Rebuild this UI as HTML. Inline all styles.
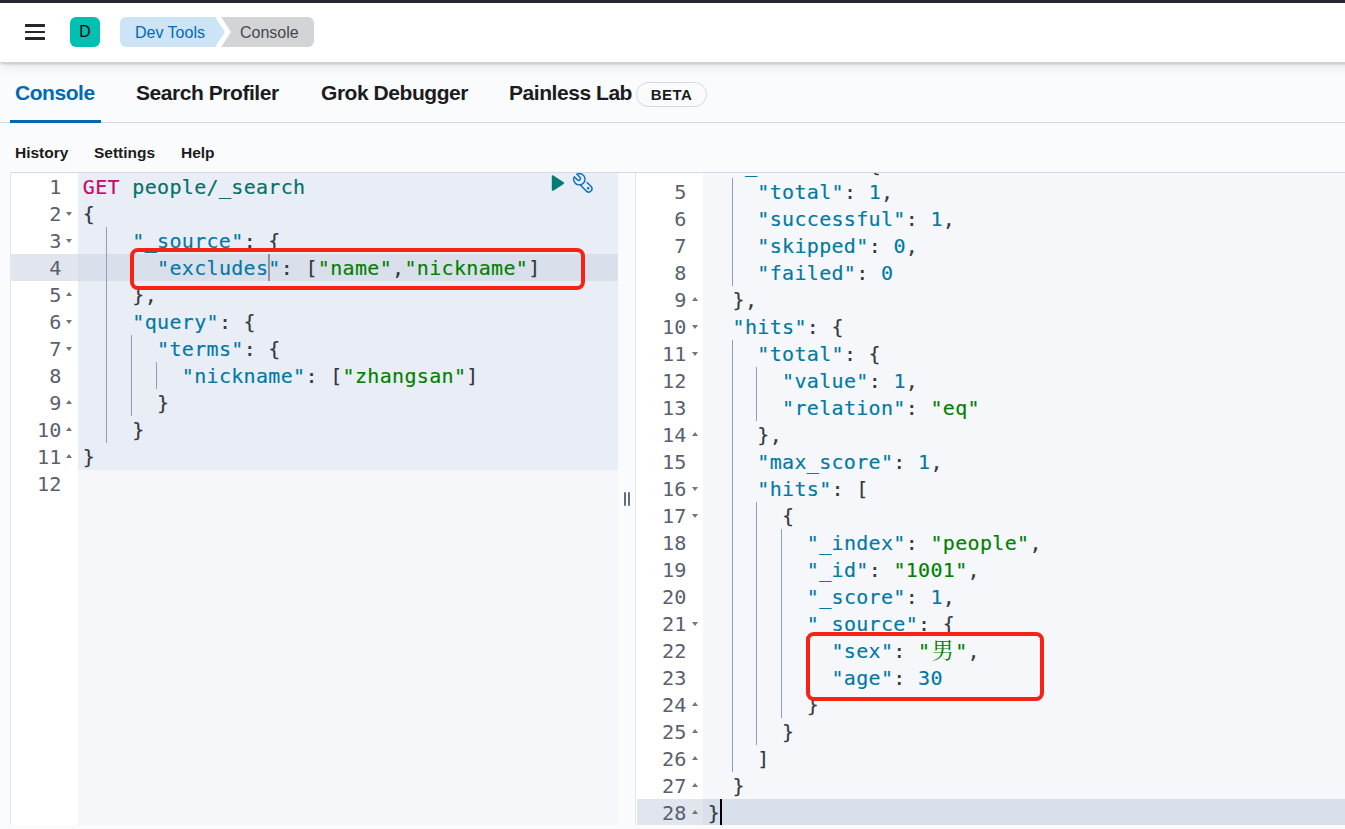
<!DOCTYPE html>
<html lang="en">
<head>
<meta charset="utf-8">
<title>Console - Dev Tools - Kibana</title>
<style>
*{box-sizing:border-box;margin:0;padding:0}
html,body{width:1345px;height:829px;overflow:hidden;background:#fafbfd}
body{position:relative;font-family:"Liberation Sans", "Noto Sans CJK SC", sans-serif;color:#1a1c21}
#topbar{position:absolute;left:0;top:0;width:1345px;height:3px;background:#25262e}
#header{position:absolute;left:0;top:3px;width:1385px;height:60px;background:#fff;border-bottom:1px solid #cdd4e0;box-shadow:0 2px 2px -1px rgba(125,130,140,.3),0 1px 5px -2px rgba(125,130,140,.3),0 6px 10px -2px rgba(130,135,145,.16)}
#burger{position:absolute;left:25px;top:21px;width:20px;height:16px}
#burger i{position:absolute;left:0;width:20px;height:2.8px;background:#25262e;border-radius:.5px}
#avatar{position:absolute;left:70px;top:14px;width:30px;height:30px;border-radius:6px;background:#00bfb3;color:#000;font-size:15.6px;line-height:30.5px;text-align:center}
.bc{position:absolute;top:14px;height:30px;line-height:31.5px;font-size:16px;white-space:nowrap}
#bc1{left:120px;width:105px;background:#cce4f5;color:#006bb4;border-radius:6px 0 0 6px;clip-path:polygon(0 0,95px 0,105px 50%,95px 100%,0 100%);padding-left:15px}
#bc2{left:221px;width:93px;background:#d3d4d6;color:#45484f;border-radius:0 6px 6px 0;clip-path:polygon(0 0,100% 0,100% 100%,0 100%,10px 50%);padding-left:19px}
#tabs{position:absolute;left:0;top:63px;width:1345px;height:60px;border-bottom:1px solid #d3dae6}
.tab{position:absolute;top:0;height:60px;line-height:60px;font-size:21px;font-weight:700;color:#1a1c21;white-space:nowrap;letter-spacing:-.45px}
.tab.sel{color:#006bb4}
#tabline{position:absolute;left:10px;top:120px;width:91px;height:3px;background:#006bb4}
#beta{position:absolute;left:636px;top:82px;width:71px;height:25px;border:1px solid #d3dae6;border-radius:13px;font-size:15px;font-weight:700;line-height:23px;text-align:center;letter-spacing:.4px;color:#1a1c21}
.mi{position:absolute;top:141px;height:24px;line-height:24px;font-size:15.5px;font-weight:700;color:#1a1c21;white-space:nowrap}
.ed{position:absolute;top:173px;height:652px;overflow:hidden;background:#f5f7fa;font-family:"DejaVu Sans Mono", "Liberation Mono", "Noto Serif CJK SC", monospace;font-size:20px;letter-spacing:.329px}
#left{left:10px;width:608px;border-left:1px solid #e1e6ef}
#right{left:635px;width:710px;border-left:1px solid #e1e6ef}
.gut{position:absolute;left:0;top:0;bottom:0;width:67px;background:#fff;color:#5a6070}
.con{position:absolute;left:67px;top:0;right:0;bottom:0}
.gl{position:absolute;left:0;width:67px;height:27px;line-height:27px}
.no{position:absolute;right:16.3px;top:.8px;font-size:20.2px;letter-spacing:.2px}
.fd,.fu{position:absolute;left:55px;width:0;height:0;border-left:3.5px solid transparent;border-right:3.5px solid transparent}
.fd{top:11.75px;border-top:4.5px solid #767676}
.fu{top:10.75px;border-bottom:4.5px solid #767676}
.cl{position:absolute;left:4.8px;right:0;height:27px;line-height:27px;white-space:pre}
.tx{position:relative;top:.6px}
.ig{position:absolute;width:1px;background:#959eb0}
.guides{position:absolute;left:0;top:0}
.p{color:#343741}.v{color:#0079a5}.s{color:#008000}.n{color:#0079a5}.m{color:#c80a68}.u{color:#007068}
.tx{-webkit-text-stroke:.15px currentColor}
.tx span{-webkit-text-stroke:.15px}
.tx .cjk{-webkit-text-stroke:0}
.cjk{font-family:"Noto Serif CJK SC",serif;display:inline-block;width:24.74px;text-align:center;font-size:22px;line-height:20px;letter-spacing:0}
.hl{position:absolute;left:0;right:0;background:#e9edf5}
.al{position:absolute;left:0;right:0;height:27px;background:#dae0eb}
.gut .al{background:#e0e5ee}
#right .gut .al{left:1px}
#right .fd,#right .fu{left:56px}
.redbox{position:absolute;border:4px solid #f82214;border-radius:8px}
#edtop{position:absolute;left:10px;top:172px;width:1335px;height:1px;background:#d3dae6}
#rs i{position:absolute;top:492px;width:2px;height:14px;background:#666c78;border-radius:1px}
</style>
</head>
<body>
<div id="topbar"></div>
<div id="header">
  <div id="burger"><i style="top:.2px"></i><i style="top:6.5px"></i><i style="top:13px"></i></div>
  <div id="avatar">D</div>
  <div class="bc" id="bc1">Dev Tools</div>
  <div class="bc" id="bc2">Console</div>
</div>
<div id="tabs">
  <div class="tab sel" style="left:15px">Console</div>
  <div class="tab" style="left:136px">Search Profiler</div>
  <div class="tab" style="left:321px">Grok Debugger</div>
  <div class="tab" style="left:509px">Painless Lab</div>
</div>
<div id="tabline"></div>
<div id="beta">BETA</div>
<div class="mi" style="left:15px">History</div>
<div class="mi" style="left:94px">Settings</div>
<div class="mi" style="left:181px">Help</div>

<div id="edtop"></div>
<div class="ed" id="left">
  <div class="gut">
    <div class="al" style="top:81px"></div>
<div class="gl" style="top:0px"><span class="no">1</span></div>
<div class="gl" style="top:27px"><span class="no">2</span><i class="fd"></i></div>
<div class="gl" style="top:54px"><span class="no">3</span><i class="fd"></i></div>
<div class="gl" style="top:81px"><span class="no">4</span></div>
<div class="gl" style="top:108px"><span class="no">5</span><i class="fu"></i></div>
<div class="gl" style="top:135px"><span class="no">6</span><i class="fd"></i></div>
<div class="gl" style="top:162px"><span class="no">7</span><i class="fd"></i></div>
<div class="gl" style="top:189px"><span class="no">8</span></div>
<div class="gl" style="top:216px"><span class="no">9</span><i class="fu"></i></div>
<div class="gl" style="top:243px"><span class="no">10</span><i class="fu"></i></div>
<div class="gl" style="top:270px"><span class="no">11</span><i class="fu"></i></div>
<div class="gl" style="top:297px"><span class="no">12</span></div>
  </div>
  <div class="con">
    <div class="hl" style="top:0;height:297px"></div>
    <div class="al" style="top:81px"></div>
    <div class="guides">
<i class="ig" style="left:28px;top:54px;height:216px"></i>
<i class="ig" style="left:53px;top:162px;height:81px"></i>
<i class="ig" style="left:78px;top:189px;height:27px"></i>
    </div>
<div class="cl" style="top:0px"><span class="tx"><span class="m">GET</span> <span class="u">people/_search</span></span></div>
<div class="cl" style="top:27px"><span class="tx"><span class="p">{</span></span></div>
<div class="cl" style="top:54px"><span class="tx">    <span class="v">"_source"</span><span class="p">: {</span></span></div>
<div class="cl" style="top:81px"><span class="tx">      <span class="v">"excludes"</span><span class="p">: [</span><span class="s">"name"</span><span class="p">,</span><span class="s">"nickname"</span><span class="p">]</span></span></div>
<div class="cl" style="top:108px"><span class="tx">    <span class="p">},</span></span></div>
<div class="cl" style="top:135px"><span class="tx">    <span class="v">"query"</span><span class="p">: {</span></span></div>
<div class="cl" style="top:162px"><span class="tx">      <span class="v">"terms"</span><span class="p">: {</span></span></div>
<div class="cl" style="top:189px"><span class="tx">        <span class="v">"nickname"</span><span class="p">: [</span><span class="s">"zhangsan"</span><span class="p">]</span></span></div>
<div class="cl" style="top:216px"><span class="tx">      <span class="p">}</span></span></div>
<div class="cl" style="top:243px"><span class="tx">    <span class="p">}</span></span></div>
<div class="cl" style="top:270px"><span class="tx"><span class="p">}</span></span></div>
<div class="cl" style="top:297px"><span class="tx"></span></div>
    <i class="ig" style="left:190px;top:81px;height:27px;background:#8e939c;width:1.5px"></i>
    <svg style="position:absolute;left:470px;top:-3px" width="20" height="26" viewBox="548 170 20 26"><path d="M552.8 176.3 L563.1 183.05 L552.8 189.8 Z" fill="#017d73" stroke="#017d73" stroke-width="2" stroke-linejoin="round"/></svg>
    <svg style="position:absolute;left:492px;top:-3px" width="26" height="26" viewBox="570 170 26 26" fill="none" stroke="#0a6dc2" stroke-width="1.4" stroke-linecap="round" stroke-linejoin="round"><path d="M576.81 174.19 L579.9 177.27 A1.8 1.8 0 0 1 577.35 179.82 L574.27 176.73 A5.65 5.65 0 1 0 576.81 174.19 Z"/><path d="M587.1 182.4 L591.15 186.45 A3.33 3.33 0 0 1 586.45 191.15 L580.2 184.83"/><circle cx="588.19" cy="188.13" r=".55" fill="#0a6dc2"/></svg>
  </div>
</div>
<div id="rs"><i style="left:624px"></i><i style="left:628px"></i></div>
<div class="ed" id="right">
  <div class="gut">
    <div class="al" style="top:626px"></div>
<div class="gl" style="top:-22px"><span class="no">4</span><i class="fd"></i></div>
<div class="gl" style="top:5px"><span class="no">5</span></div>
<div class="gl" style="top:32px"><span class="no">6</span></div>
<div class="gl" style="top:59px"><span class="no">7</span></div>
<div class="gl" style="top:86px"><span class="no">8</span></div>
<div class="gl" style="top:113px"><span class="no">9</span><i class="fu"></i></div>
<div class="gl" style="top:140px"><span class="no">10</span><i class="fd"></i></div>
<div class="gl" style="top:167px"><span class="no">11</span><i class="fd"></i></div>
<div class="gl" style="top:194px"><span class="no">12</span></div>
<div class="gl" style="top:221px"><span class="no">13</span></div>
<div class="gl" style="top:248px"><span class="no">14</span><i class="fu"></i></div>
<div class="gl" style="top:275px"><span class="no">15</span></div>
<div class="gl" style="top:302px"><span class="no">16</span><i class="fd"></i></div>
<div class="gl" style="top:329px"><span class="no">17</span><i class="fd"></i></div>
<div class="gl" style="top:356px"><span class="no">18</span></div>
<div class="gl" style="top:383px"><span class="no">19</span></div>
<div class="gl" style="top:410px"><span class="no">20</span></div>
<div class="gl" style="top:437px"><span class="no">21</span><i class="fd"></i></div>
<div class="gl" style="top:464px"><span class="no">22</span></div>
<div class="gl" style="top:491px"><span class="no">23</span></div>
<div class="gl" style="top:518px"><span class="no">24</span><i class="fu"></i></div>
<div class="gl" style="top:545px"><span class="no">25</span><i class="fu"></i></div>
<div class="gl" style="top:572px"><span class="no">26</span><i class="fu"></i></div>
<div class="gl" style="top:599px"><span class="no">27</span><i class="fu"></i></div>
<div class="gl" style="top:626px"><span class="no">28</span><i class="fu"></i></div>
  </div>
  <div class="con">
    <div class="al" style="top:626px"></div>
    <div class="guides">
<i class="ig" style="left:29px;top:5px;height:108px"></i>
<i class="ig" style="left:29px;top:167px;height:432px"></i>
<i class="ig" style="left:53px;top:194px;height:54px"></i>
<i class="ig" style="left:53px;top:329px;height:243px"></i>
<i class="ig" style="left:78px;top:356px;height:189px"></i>
<i class="ig" style="left:103px;top:464px;height:54px"></i>
    </div>
<div class="cl" style="top:-22px"><span class="tx">  <span class="v">"_shards"</span><span class="p">: {</span></span></div>
<div class="cl" style="top:5px"><span class="tx">    <span class="v">"total"</span><span class="p">: </span><span class="n">1</span><span class="p">,</span></span></div>
<div class="cl" style="top:32px"><span class="tx">    <span class="v">"successful"</span><span class="p">: </span><span class="n">1</span><span class="p">,</span></span></div>
<div class="cl" style="top:59px"><span class="tx">    <span class="v">"skipped"</span><span class="p">: </span><span class="n">0</span><span class="p">,</span></span></div>
<div class="cl" style="top:86px"><span class="tx">    <span class="v">"failed"</span><span class="p">: </span><span class="n">0</span></span></div>
<div class="cl" style="top:113px"><span class="tx">  <span class="p">},</span></span></div>
<div class="cl" style="top:140px"><span class="tx">  <span class="v">"hits"</span><span class="p">: {</span></span></div>
<div class="cl" style="top:167px"><span class="tx">    <span class="v">"total"</span><span class="p">: {</span></span></div>
<div class="cl" style="top:194px"><span class="tx">      <span class="v">"value"</span><span class="p">: </span><span class="n">1</span><span class="p">,</span></span></div>
<div class="cl" style="top:221px"><span class="tx">      <span class="v">"relation"</span><span class="p">: </span><span class="s">"eq"</span></span></div>
<div class="cl" style="top:248px"><span class="tx">    <span class="p">},</span></span></div>
<div class="cl" style="top:275px"><span class="tx">    <span class="v">"max_score"</span><span class="p">: </span><span class="n">1</span><span class="p">,</span></span></div>
<div class="cl" style="top:302px"><span class="tx">    <span class="v">"hits"</span><span class="p">: [</span></span></div>
<div class="cl" style="top:329px"><span class="tx">      <span class="p">{</span></span></div>
<div class="cl" style="top:356px"><span class="tx">        <span class="v">"_index"</span><span class="p">: </span><span class="s">"people"</span><span class="p">,</span></span></div>
<div class="cl" style="top:383px"><span class="tx">        <span class="v">"_id"</span><span class="p">: </span><span class="s">"1001"</span><span class="p">,</span></span></div>
<div class="cl" style="top:410px"><span class="tx">        <span class="v">"_score"</span><span class="p">: </span><span class="n">1</span><span class="p">,</span></span></div>
<div class="cl" style="top:437px"><span class="tx">        <span class="v">"_source"</span><span class="p">: {</span></span></div>
<div class="cl" style="top:464px"><span class="tx">          <span class="v">"sex"</span><span class="p">: </span><span class="s">"<span class="cjk">男</span>"</span><span class="p">,</span></span></div>
<div class="cl" style="top:491px"><span class="tx">          <span class="v">"age"</span><span class="p">: </span><span class="n">30</span></span></div>
<div class="cl" style="top:518px"><span class="tx">        <span class="p">}</span></span></div>
<div class="cl" style="top:545px"><span class="tx">      <span class="p">}</span></span></div>
<div class="cl" style="top:572px"><span class="tx">    <span class="p">]</span></span></div>
<div class="cl" style="top:599px"><span class="tx">  <span class="p">}</span></span></div>
<div class="cl" style="top:626px"><span class="tx"><span class="p">}</span></span></div>
    <i class="ig" style="left:17px;top:626px;height:27px;background:#000;width:2px"></i>
  </div>
</div>
<div class="redbox" style="left:130px;top:248px;width:455px;height:42px"></div>
<div class="redbox" style="left:806px;top:632px;width:238px;height:69px"></div>
</body>
</html>
